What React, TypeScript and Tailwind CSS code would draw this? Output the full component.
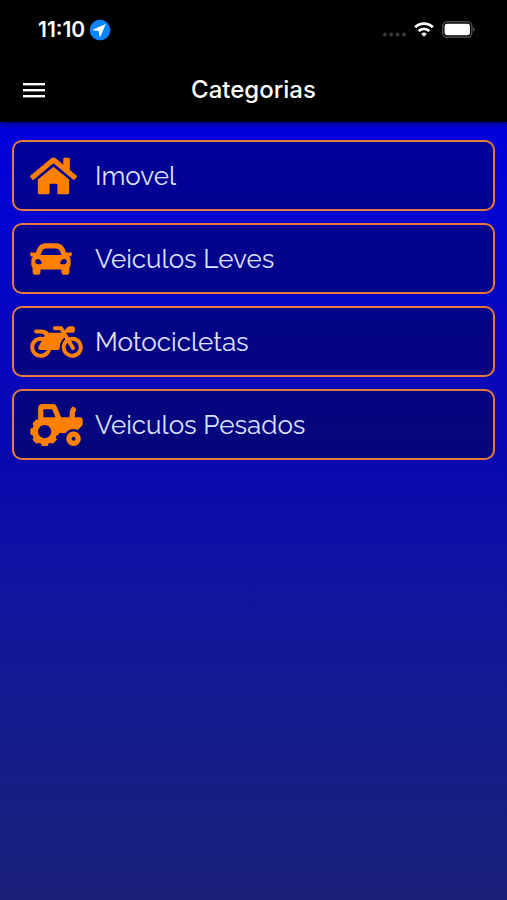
import type { IconType } from 'react-icons';
import { FaCar, FaHome, FaMotorcycle, FaTractor } from 'react-icons/fa';

interface Category {
  name: string;
  icon: IconType;
  iconWidth: string;
}

const categories: Category[] = [
  { name: 'Imovel', icon: FaHome, iconWidth: 'w-[47px]' },
  { name: 'Veiculos Leves', icon: FaCar, iconWidth: 'w-[42px]' },
  { name: 'Motocicletas', icon: FaMotorcycle, iconWidth: 'w-[53px]' },
  { name: 'Veiculos Pesados', icon: FaTractor, iconWidth: 'w-[53px]' },
];

function StatusBar() {
  return (
    <div className="flex h-[60px] items-center justify-between pr-8 pl-[38px]">
      <div className="flex items-center gap-1">
        <span className="text-[21px] font-semibold">11:10</span>
        <svg className="size-[22px]" viewBox="0 0 22 22" aria-hidden="true">
          <circle cx="11" cy="11" r="10.3" fill="#0a84ff" />
          <path d="M16.8 5 4.6 10.3c-.7.3-.5 1.2.2 1.3l5 .5.4 4.9c.1.8 1 .9 1.3.2z" fill="#fff" />
        </svg>
      </div>
      <div className="flex items-center gap-2">
        <svg className="h-5 w-6" viewBox="0 0 24 20" fill="#3a3a3c" aria-hidden="true">
          <circle cx="2.8" cy="14.5" r="1.9" />
          <circle cx="9.2" cy="14.5" r="1.9" />
          <circle cx="15.6" cy="14.5" r="1.9" />
          <circle cx="22" cy="14.5" r="1.9" />
        </svg>
        <svg className="h-5 w-5" viewBox="0 0 20 20" fill="none" stroke="#fff" strokeWidth="2.7" aria-hidden="true">
          <path d="M1.2 7.2a12.6 12.6 0 0 1 17.6 0" />
          <path d="M4.6 11a7.8 7.8 0 0 1 10.8 0" />
          <path d="M10 16.8 7.2 13.9a4 4 0 0 1 5.6 0z" fill="#fff" stroke="none" />
        </svg>
        <svg className="h-5 w-[33px]" viewBox="0 0 33 20" aria-hidden="true">
          <rect x="0.8" y="1.8" width="29" height="15.4" rx="4.4" fill="none" stroke="#4b4b4d" strokeWidth="1.5" />
          <rect x="2.6" y="3.8" width="25.4" height="11.4" rx="2.4" fill="#fff" />
          <path d="M31 7.2c2 .6 2 3.8 0 4.4z" fill="#5a5a5c" />
        </svg>
      </div>
    </div>
  );
}

function AppBar() {
  return (
    <div className="grid h-[62px] grid-cols-[68px_1fr_68px] items-center pb-[3px]">
      <button type="button" aria-label="Menu" className="flex h-12 items-center justify-center">
        <svg className="h-5 w-6" viewBox="0 0 24 20" fill="#fff" aria-hidden="true">
          <rect x="1" y="3" width="22" height="2.4" />
          <rect x="1" y="9" width="22" height="2.4" />
          <rect x="1" y="15" width="22" height="2.4" />
        </svg>
      </button>
      <h1 className="text-center text-2xl font-medium">Categorias</h1>
    </div>
  );
}

function CategoryCard({ category }: { category: Category }) {
  const Icon = category.icon;
  return (
    <button
      type="button"
      className="flex h-[71px] w-full items-center gap-3 rounded-[10px] border-2 border-[#e67a3c] bg-black/30 px-4 text-left"
    >
      <span className="flex w-[53px]">
        <Icon className={`h-[42px] shrink-0 text-[#ff8000] ${category.iconWidth}`} />
      </span>
      <span className="pt-0.5 font-['Raleway','Lato',sans-serif] text-[26px] text-[#dfe2ff]">{category.name}</span>
    </button>
  );
}

export default function App() {
  return (
    <div className="flex min-h-screen flex-col bg-[#1a2078] font-['Inter',sans-serif]">
      <header className="relative bg-black text-white shadow-[0_2px_5px_rgba(0,0,0,0.5)]">
        <StatusBar />
        <AppBar />
      </header>
      <main className="flex-1 bg-linear-to-b from-[#0000dc] via-[#0909ae] via-45% to-[#1a2078] px-3 pt-[18px] pb-6">
        <ul className="flex flex-col gap-3">
          {categories.map((category) => (
            <li key={category.name}>
              <CategoryCard category={category} />
            </li>
          ))}
        </ul>
      </main>
    </div>
  );
}
